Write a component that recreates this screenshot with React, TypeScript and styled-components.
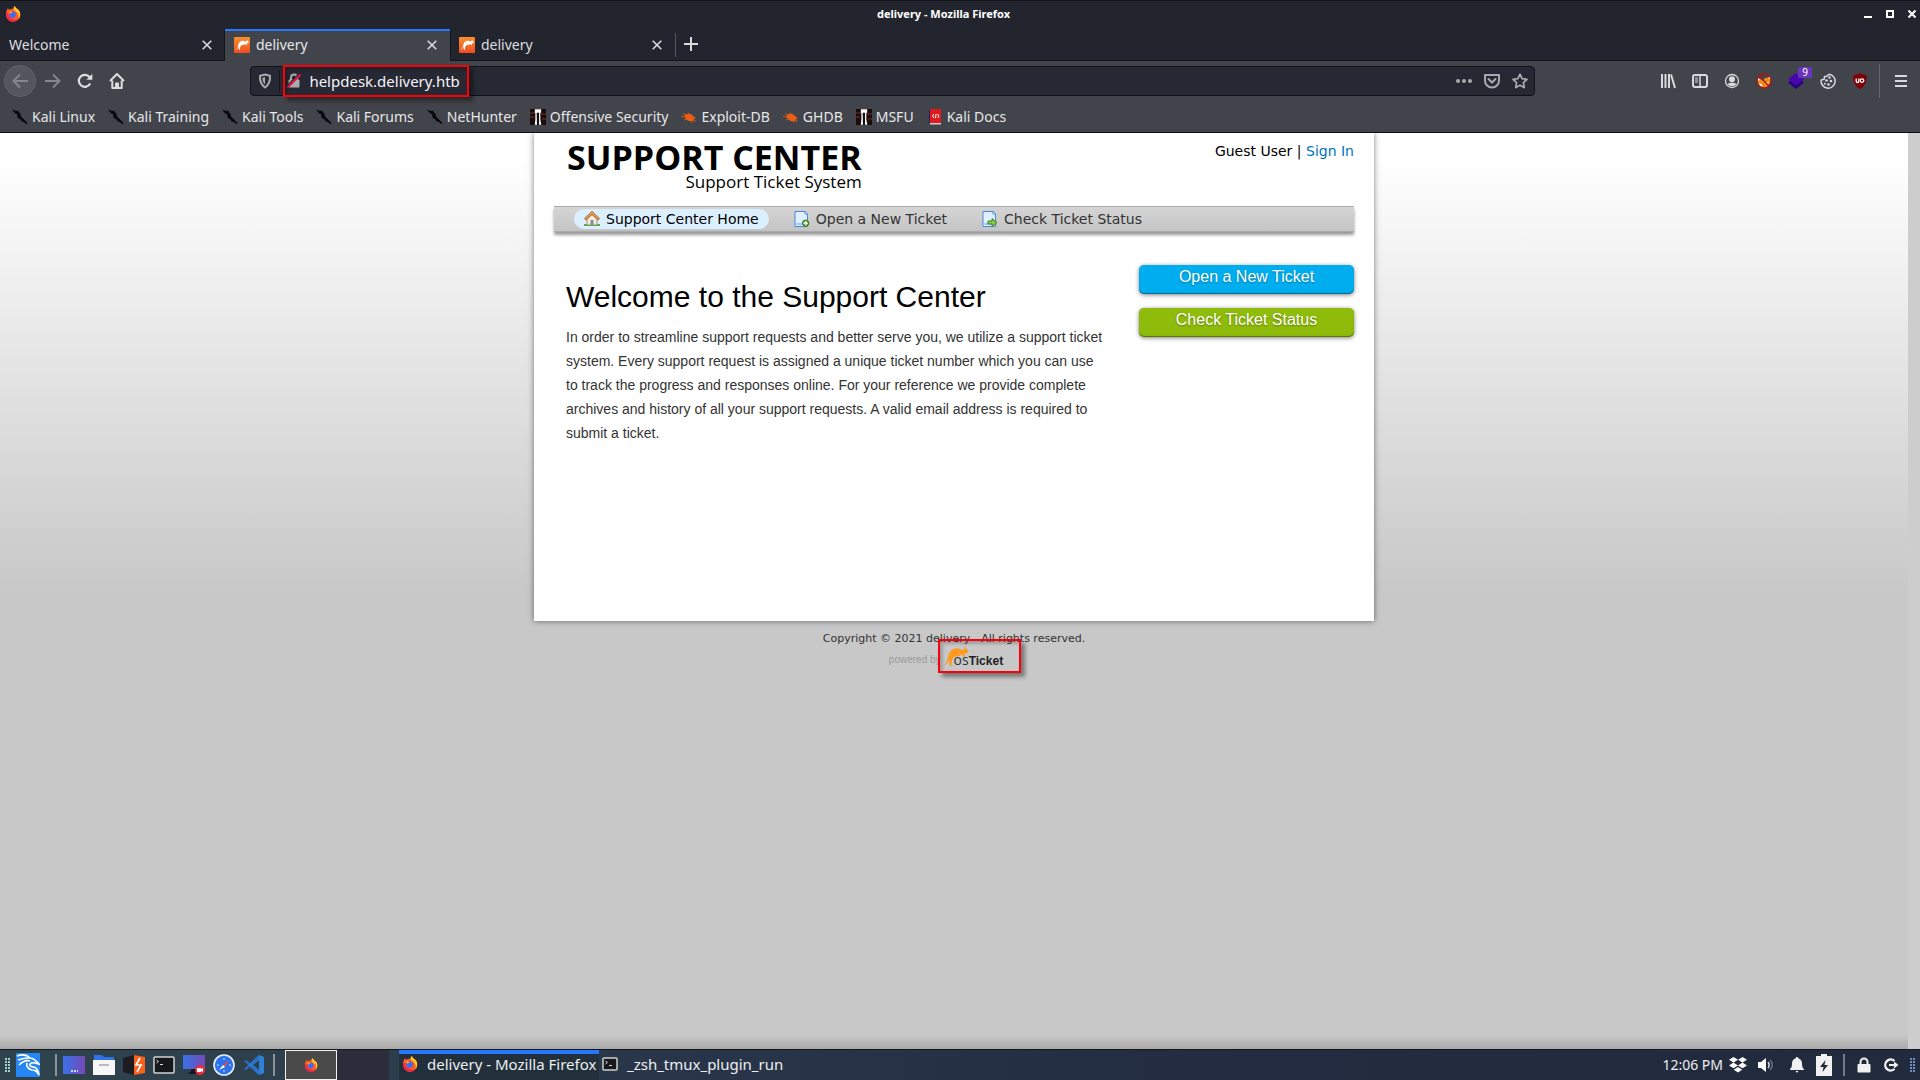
import React from "react";
import styled, { createGlobalStyle } from "styled-components";

const ui = `"Noto Sans", "Open Sans", sans-serif`;
const dejavu = `"DejaVu Sans", Verdana, sans-serif`;
const helvetica = `"Liberation Sans", Arial, sans-serif`;

const GlobalStyle = createGlobalStyle`
  * { box-sizing: border-box; }
  html, body { margin: 0; padding: 0; }
  body { background: #23252e; font-family: ${ui}; }
  button { margin: 0; padding: 0; border: 0; background: none; color: inherit; font: inherit; display: flex; align-items: center; }
  a { text-decoration: none; color: inherit; }
  svg { display: block; flex: none; }
`;

const Screen = styled.div`
  display: flex;
  flex-direction: column;
  min-height: 100vh;
`;

/* ---------- window chrome ---------- */

const TitleBar = styled.header`
  display: grid;
  grid-template-columns: 1fr auto 1fr;
  align-items: center;
  height: 29px;
  padding: 0 4px 2px 5px;
  border-top: 1px solid #101116;
  background: #23252e;
  color: #fff;
`;

const WindowTitle = styled.h1`
  margin: 0;
  padding-right: 34px;
  font-size: 11px;
  line-height: 16px;
  font-weight: 700;
  grid-column: 2;
`;

const WindowButtons = styled.div`
  display: flex;
  justify-content: flex-end;
  gap: 14px;
`;

const TabStrip = styled.nav`
  display: flex;
  height: 32px;
  background: #23252e;
  border-bottom: 1px solid #111218;
`;

const Tab = styled.div<{ $active?: boolean }>`
  display: flex;
  align-items: center;
  gap: 6px;
  width: 225px;
  height: ${(p) => (p.$active ? 32 : 31)}px;
  padding: 0 13px 2px 9px;
  border-top: 2px solid ${(p) => (p.$active ? "#2777ff" : "transparent")};
  background: ${(p) => (p.$active ? "#42444b" : "transparent")};
  box-shadow: ${(p) => (p.$active ? "1px 0 0 #15161c, -1px 0 0 #15161c" : "none")};
  color: ${(p) => (p.$active ? "#e6e7e8" : "#dcdde0")};
  font-size: 14px;
  line-height: 20px;
`;

const TabLabel = styled.span`
  flex: 1;
`;

const NewTab = styled.button`
  && {
    align-self: center;
    height: 24px;
    padding: 0 0 1px 8px;
    border-left: 1px solid #55575f;
  }
`;

const Toolbar = styled.div`
  display: flex;
  align-items: center;
  height: 40px;
  padding: 0 13px 0 4px;
  background: #42444b;
  color: #d8d9dc;
`;

const NavButtons = styled.div`
  display: flex;
  align-items: center;
`;

const NavButton = styled.button<{ $round?: boolean; $dim?: boolean }>`
  && {
    justify-content: center;
    width: 32px;
    height: 32px;
    margin-right: ${(p) => (p.$round ? 1 : 0)}px;
    border-radius: 16px;
    background: ${(p) => (p.$round ? "#55555e" : "none")};
    border: ${(p) => (p.$round ? "1px solid #62636b" : "0")};
    color: ${(p) => (p.$dim ? "#85868b" : "#dcdddd")};
  }
`;

const Spring = styled.div`
  flex: 1 0 2px;
`;

const UrlBar = styled.div`
  display: flex;
  align-items: center;
  flex: 11;
  height: 30px;
  padding: 0 6px 0 7px;
  border: 1px solid #111217;
  border-radius: 4px;
  background: #262833;
  color: #a9aaae;
`;

const UrlShield = styled.button`
  && {
    height: 22px;
    padding-right: 7px;
    border-right: 1px solid #14151b;
  }
`;

const Identity = styled.div`
  position: relative;
  display: flex;
  align-items: center;
  width: 189px;
  padding-left: 7px;
`;

const RedFrame = styled.span`
  position: absolute;
  inset: -4px 0 -4px 3px;
  border: 2px solid #fb0007;
  box-shadow: 4px 4px 4px rgba(0, 0, 0, 0.4), inset 3px 3px 3px rgba(0, 0, 0, 0.2);
  pointer-events: none;
`;

const UrlInput = styled.input`
  flex: 1;
  min-width: 0;
  height: 24px;
  margin-left: 8px;
  padding: 0;
  border: 0;
  outline: 0;
  background: none;
  color: #f4f4f6;
  font: 15px/20px ${ui};
`;

const UrlActions = styled.div`
  display: flex;
  gap: 12px;
  margin-left: auto;
`;

const Tools = styled.div`
  display: flex;
  align-items: center;
`;

const Tool = styled.button`
  && {
    position: relative;
    justify-content: center;
    width: 32px;
    height: 32px;
  }
`;

const Badge = styled.span`
  position: absolute;
  left: 18px;
  top: 2px;
  width: 14px;
  border-radius: 2px;
  background: #6a35bd;
  color: #fff;
  font-size: 10px;
  line-height: 11px;
  text-align: center;
`;

const MenuButton = styled.button`
  && {
    height: 34px;
    margin-left: 3px;
    padding-left: 15px;
    border-left: 1px solid #63656b;
  }
`;

const Bookmarks = styled.nav`
  display: flex;
  align-items: center;
  gap: 13px;
  height: 32px;
  padding: 0 12px;
  border-bottom: 1px solid #0d0e12;
  background: #42444b;
  color: #e6e7e8;
  font-size: 14px;
  line-height: 20px;
`;

const Bookmark = styled.a`
  display: flex;
  align-items: center;
  gap: 4px;
  white-space: nowrap;
`;

/* ---------- web page ---------- */

const Viewport = styled.div`
  display: flex;
  flex: 1;
`;

const Page = styled.div`
  flex: 1;
  display: flex;
  flex-direction: column;
  align-items: center;
  background:
    linear-gradient(to top, #a9a9a9, rgba(200, 200, 200, 0) 14px),
    linear-gradient(#fff 0, #fff 26px, #c8c8c8 458px);
`;

const ScrollTrack = styled.div`
  width: 12px;
  background: #cdcdcd;
`;

const Container = styled.div`
  width: 840px;
  min-height: 488px;
  padding: 0 20px;
  background: #fff;
  box-shadow: 0 0 6px rgba(0, 0, 0, 0.5);
  clip-path: inset(0 -10px -10px -10px);
`;

const SiteHeader = styled.header`
  display: flex;
  justify-content: space-between;
  height: 73px;
  padding: 8px 0 0 13px;
`;

const Logo = styled.a`
  display: flex;
  flex-direction: column;
  align-items: flex-end;
  font-family: "Open Sans", "Noto Sans", sans-serif;
  color: #000;
`;

const LogoTitle = styled.span`
  font-size: 34px;
  line-height: 32px;
  font-weight: 700;
`;

const LogoSub = styled.span`
  font-size: 17px;
  line-height: 18px;
`;

const UserLine = styled.p`
  margin: 0;
  font: 14px/21px ${dejavu};
  color: #000;

  a { color: #0072bc; }
`;

const SiteNav = styled.nav`
  display: flex;
  align-items: center;
  gap: 15px;
  height: 26px;
  padding: 0 0 1px 20px;
  border-top: 1px solid #aaa;
  background: linear-gradient(#d5d5d5, #c3c3c3);
  box-shadow: 0 3px 3px rgba(0, 0, 0, 0.4), inset 0 -1px 0 #aaa;
`;

const SiteNavLink = styled.a<{ $active?: boolean }>`
  display: flex;
  align-items: center;
  gap: 6px;
  height: 20px;
  padding: 0 10px;
  border-radius: 10px;
  background: ${(p) => (p.$active ? "#dbefff" : "transparent")};
  color: ${(p) => (p.$active ? "#000" : "#333")};
  font: 14px/18px ${dejavu};
`;

const Content = styled.main`
  display: flex;
  justify-content: space-between;
  padding: 33px 0 0 12px;
`;

const Intro = styled.section`
  width: 540px;
`;

const Heading = styled.h2`
  margin: 12px 0 8px;
  font: 400 30px/40px ${helvetica};
  color: #000;
`;

const Copy = styled.p`
  margin: 0;
  font: 14px/24px ${helvetica};
  color: #333;
`;

const Side = styled.aside`
  display: flex;
  flex-direction: column;
  gap: 14px;
  width: 215px;
`;

const ActionLink = styled.a<{ $color: string }>`
  height: 29px;
  border-radius: 5px;
  background: ${(p) => p.$color};
  box-shadow: 0 1px 4px rgba(0, 0, 0, 0.5), inset 0 -1px 1px rgba(0, 0, 0, 0.4);
  color: #fff;
  font: 16px/24px ${helvetica};
  text-align: center;
  text-shadow: 0 1px 2px rgba(0, 0, 0, 0.35);
`;

const Footer = styled.footer`
  display: flex;
  flex-direction: column;
  align-items: center;
  padding-top: 9px;
`;

const Copyright = styled.p`
  margin: 0;
  font: 11px/18px ${dejavu};
  color: #333;
`;

const Powered = styled.a`
  display: flex;
  align-items: center;
  gap: 2px;
  height: 24px;
  margin-right: 16px;
  font: 10px/14px ${helvetica};
  color: #999;
`;

const OsTicket = styled.span`
  position: relative;
  display: flex;
  align-items: flex-start;
  height: 28px;
`;

const OsWord = styled.span`
  margin-left: -15px;
  padding-top: 5px;
  font: 14px/18px "Open Sans", sans-serif;
  color: #333;

  b { color: #222; font-family: ${helvetica}; font-size: 12px; }
`;

const TicketFrame = styled(RedFrame)`
  inset: -7px -18px 1px -5px;
`;

/* ---------- desktop panel ---------- */

const Panel = styled.footer`
  display: flex;
  align-items: center;
  height: 31px;
  padding: 0 5px;
  border-top: 1px solid #15171f;
  background: linear-gradient(90deg, #2f434d 0, #2c3f4b 340px, #29364a 640px, #232c40 1200px, #222a3d);
  color: #eceef0;
  font-size: 15px;
  line-height: 20px;
`;

const Launchers = styled.div`
  display: flex;
  align-items: center;
  gap: 8px;
`;

const KaliButton = styled.button`
  && { margin: 0 15px 0 6px; }
`;

const Rule = styled.span`
  width: 2px;
  height: 22px;
  margin-right: 6px;
  background: #8c949c;
`;

const Workspaces = styled.div`
  display: flex;
  margin: 0 10px 0 4px;
`;

const Workspace = styled.button<{ $current?: boolean }>`
  && {
    justify-content: center;
    width: 52px;
    height: 30px;
    border: ${(p) => (p.$current ? "1px solid #f2f2f2" : "0")};
    background: ${(p) => (p.$current ? "#4a4a4b" : "#2b2e3a")};
  }
`;

const Task = styled.button<{ $active?: boolean }>`
  && {
    gap: 9px;
    width: 200px;
    height: 30px;
    padding: 0 3px 6px;
    border-top: 4px solid ${(p) => (p.$active ? "#2777ff" : "transparent")};
    background: ${(p) => (p.$active ? "#22303c" : "transparent")};
    white-space: nowrap;
  }
`;

const Tray = styled.div`
  display: flex;
  align-items: center;
  gap: 11px;
  margin-left: auto;
`;

const Clock = styled.time`
  margin-right: -5px;
  font-size: 14px;
`;

/* ---------- drawings ---------- */

const FirefoxIcon = ({ size = 16 }: { size?: number }) => (
  <svg width={size} height={size} viewBox="0 0 16 16">
    <path d="M1 8c0-3 1-4.500 2-6 .3 1 .7 1.400 1.200 1.800C5.500 2.800 7 2.500 8.600 3 8.500 1.600 9 .8 10 0c.2 1.400 1 2 2 2.800C14 4 15.500 6 15.200 9 14.800 13 11.700 15.700 8 15.700 4 15.700 1 12.500 1 8z" fill="#ff5a1f" />
    <path d="M1 8.500c.2 4 3.200 7.200 7 7.200 2.500 0 4.700-1.200 6-3.200-2 1.500-5 1.700-7.300.3C4 11.200 3 9 3 6.500c-1 .5-1.700 1-2 2z" fill="#f0264f" />
    <path d="M10 0c.2 1.400 1 2 2 2.800C14 4 15.500 6 15.200 9c-.2 1.600-.8 3-1.700 4 .5-3 0-5-1.500-6.500C10.500 5 8.800 4.500 8.600 3 8.500 1.600 9 .8 10 0z" fill="#ffc62d" />
    <circle cx="7.600" cy="8.600" r="3.200" fill="#3b6cf5" />
    <path d="M3.500 5.500c1.500-.7 3-.3 4 .8L6 7.500C5 7.500 4 7 3.500 5.500z" fill="#ff9a2b" />
  </svg>
);

const roo =
  "M0 19C4 19 4 14 5 11 6 5 10 1.800 15 2.200L19 4l2.300-.5L22 0l1.500 3L26 5.500 24 7l-2.500.3L22 11l-1.500-.5L19 8.500c-2 1.500-5 1.500-8 2.500l-2 3.300L8.500 19l2 .8H6.300L6.800 13C5.300 16 4 19.800 0 19z";

const RooIcon = () => (
  <svg width="16" height="16" viewBox="0 0 16 16">
    <defs>
      <linearGradient id="roo" x1="0" y1="0" x2="0" y2="1">
        <stop offset="0" stopColor="#f9902b" />
        <stop offset="1" stopColor="#ef4d22" />
      </linearGradient>
    </defs>
    <rect width="16" height="16" rx="1" fill="url(#roo)" />
    <path d={roo} fill="#fff" transform="translate(1.500 2.500) scale(.52)" />
  </svg>
);

const CloseIcon = () => (
  <svg width="10" height="10" viewBox="0 0 10 10" stroke="#d9d9da" strokeWidth="1.600">
    <path d="M.7.700l8.600 8.600M9.300.700L.7 9.300" />
  </svg>
);

const KaliMark = () => (
  <svg width="16" height="16" viewBox="0 0 16 16">
    <path d="M0 .5l4 1.500L6 1.500l.8 1.800L9 5.500l-.5 1.300 2.500 2.700L15.500 14l-.8 1.200-3.200-2.400-2-.2-.8-2L6.500 9.500 5 7l.8-1.300L3 4.200z" fill="#08080a" />
  </svg>
);

const OffsecMark = () => (
  <svg width="16" height="16" viewBox="0 0 16 16">
    <path fill="#1d0b0b" d="M0 0h16v16H0z" />
    <path d="M0 4h5M0 8h4M11 5h5M12 10h4" stroke="#6a3531" />
    <path d="M5.500 1h5v2h-5zM6 3v8l-.5 4H7M9.700 3v8l.8 4H9" stroke="#fff" strokeWidth="1.300" fill="#eee" />
    <path d="M7.200 4.500h1.600v11H7.200z" fill="#111" />
  </svg>
);

const BugMark = () => (
  <svg width="16" height="16" viewBox="0 0 16 16">
    <ellipse cx="8.500" cy="8.500" rx="5.200" ry="3.400" transform="rotate(22 8.500 8.500)" fill="#ea5d12" />
    <path d="M2 4.500l4 1.700M0 7.500l5 .5M3 11l3-1M7 3.500l2 2M12 11l3 1.500M10 12l2 2M13 8.500l2 .5" stroke="#ea5d12" strokeWidth=".8" fill="none" />
  </svg>
);

const DocsMark = () => (
  <svg width="16" height="16" viewBox="0 0 16 16">
    <path fill="#20245a" d="M2 1h2v13H2z" />
    <path fill="#de1a1e" d="M3 0h11v14H3z" />
    <path fill="#ccc" d="M3 14h11v1.500H3z" />
    <path d="M7 5L5.500 7 7 9M10.500 5L12 7l-1.500 2M9.200 5l-.8 4" stroke="#fff" fill="none" />
  </svg>
);

const BellIcon = () => (
  <svg width="16" height="16" viewBox="0 0 16 16" fill="#eff0f0">
    <path d="M8 0c.8 0 1.200.5 1.200 1.200C11.800 1.800 13 4 13 6.500c0 3 .6 4.500 2 5.500v1H1v-1c1.400-1 2-2.500 2-5.500C3 4 4.200 1.800 6.800 1.200 6.800.5 7.200 0 8 0z" />
    <path d="M6.500 14h3l-1 1.500h-1z" />
  </svg>
);

const TermIcon = ({ w = 22, h = 18 }: { w?: number; h?: number }) => (
  <svg width={w} height={h} viewBox={`0 0 ${w} ${h}`}>
    <rect x="1" y="1" width={w - 2} height={h - 2} rx="1" fill="#171819" stroke="#cfd1d1" strokeWidth="1.500" />
    <path d="M3.500 4l2 1.500-2 1.500M7 8.500h3" stroke="#ddd" fill="none" />
  </svg>
);

const Grip = ({ tint }: { tint: string }) => (
  <svg width="5" height="15" viewBox="0 0 5 15" fill={tint}>
    {[0, 3, 6, 9, 12].map((y) => (
      <path key={y} d={`M0 ${y}h2v2H0zM3 ${y}h2v2H3z`} />
    ))}
  </svg>
);

const PaperIcon = ({ kind }: { kind: "add" | "go" }) => (
  <svg width="16" height="16" viewBox="0 0 16 16">
    <path d="M1 .5h10.500l2 2.500v12.500H1z" fill="#dff0ff" stroke="#4a86d8" />
    <path d="M11 .5V3h2.500" fill="#fff" stroke="#4a86d8" />
    <path d="M2.500 12h6v2h-6z" fill="#8ecbff" />
    {kind === "add" ? (
      <>
        <circle cx="11.700" cy="12.200" r="3.200" fill="#5fa53a" stroke="#3a7a22" />
        <path d="M9.700 12.200h4M11.700 10.200v4" stroke="#fff" strokeWidth="1.400" />
      </>
    ) : (
      <path d="M6 10h4V7.500l5 4-5 4V13H6z" fill="#8cc63f" stroke="#3d8226" />
    )}
  </svg>
);

const HouseIcon = () => (
  <svg width="16" height="16" viewBox="0 0 16 16">
    <path d="M0 13h16v2H0z" fill="#58ad45" />
    <path d="M3 7l5-5 5 5v7H3z" fill="#f4ead9" stroke="#94806c" strokeWidth=".8" />
    <path d="M1 8.500L8 2l7 6.500" fill="none" stroke="#a45f20" strokeWidth="3" />
    <path d="M1.300 8L8 1.800 14.700 8" fill="none" stroke="#e9ad67" strokeWidth="1.300" />
    <path d="M6.500 9h3v5h-3z" fill="#86909b" />
  </svg>
);

const bookmarks: [string, () => React.ReactElement][] = [
  ["Kali Linux", KaliMark],
  ["Kali Training", KaliMark],
  ["Kali Tools", KaliMark],
  ["Kali Forums", KaliMark],
  ["NetHunter", KaliMark],
  ["Offensive Security", OffsecMark],
  ["Exploit-DB", BugMark],
  ["GHDB", BugMark],
  ["MSFU", OffsecMark],
  ["Kali Docs", DocsMark],
];

const Browser = () => (
  <>
    <TitleBar>
      <FirefoxIcon />
      <WindowTitle>delivery - Mozilla Firefox</WindowTitle>
      <WindowButtons>
        <button aria-label="Minimize"><svg width="8" height="8"><path d="M0 6h8v2H0z" fill="#fff" /></svg></button>
        <button aria-label="Maximize"><svg width="8" height="8"><path d="M1 1h6v6H1z" fill="none" stroke="#fff" strokeWidth="2" /></svg></button>
        <button aria-label="Close"><svg width="8" height="8"><path d="M.5.500l7 7M7.500.500l-7 7" stroke="#fff" strokeWidth="2" /></svg></button>
      </WindowButtons>
    </TitleBar>
    <TabStrip>
      <Tab>
        <TabLabel>Welcome</TabLabel>
        <button aria-label="Close tab"><CloseIcon /></button>
      </Tab>
      <Tab $active>
        <RooIcon />
        <TabLabel>delivery</TabLabel>
        <button aria-label="Close tab"><CloseIcon /></button>
      </Tab>
      <Tab>
        <RooIcon />
        <TabLabel>delivery</TabLabel>
        <button aria-label="Close tab"><CloseIcon /></button>
      </Tab>
      <NewTab aria-label="New tab">
        <svg width="14" height="14"><path d="M7 0v14M0 7h14" stroke="#d9d9da" strokeWidth="2" /></svg>
      </NewTab>
    </TabStrip>
    <Toolbar>
      <NavButtons>
        <NavButton $round $dim aria-label="Back">
          <svg width="16" height="16" fill="none" stroke="currentColor" strokeWidth="2"><path d="M16 8H1.500M8 1.500L1.500 8 8 14.500" /></svg>
        </NavButton>
        <NavButton $dim aria-label="Forward">
          <svg width="16" height="16" fill="none" stroke="currentColor" strokeWidth="2"><path d="M0 8h14.500M8 1.500L14.500 8 8 14.500" /></svg>
        </NavButton>
        <NavButton aria-label="Reload">
          <svg width="16" height="16" fill="none" stroke="currentColor" strokeWidth="2.200"><path d="M13.200 10.500A6 6 0 1 1 12.500 4L14 5.500" /><path d="M15.300.800v6H9.300z" fill="currentColor" stroke="none" /></svg>
        </NavButton>
        <NavButton aria-label="Home">
          <svg width="16" height="16" fill="none" stroke="currentColor" strokeWidth="2" strokeLinejoin="round"><path d="M1 8l7-7 7 7M3.300 7.500V15h9.400V7.500" /><path d="M7 15v-4.500h2V15" /></svg>
        </NavButton>
      </NavButtons>
      <Spring />
      <UrlBar>
        <UrlShield aria-label="Tracking protection">
          <svg width="14" height="16" viewBox="0 0 14 16"><path d="M7 1.500l5 1.300c.3 5-1 9-5 11.700C3 11.800 1.700 7.800 2 2.800z" fill="none" stroke="currentColor" strokeWidth="2" /><path d="M7 4v7.500C5 9.500 4.500 7.500 4.500 4.700z" fill="currentColor" /></svg>
        </UrlShield>
        <Identity>
          <svg width="14" height="16" viewBox="0 0 14 16">
            <path d="M4 7V4.500a3 3 0 0 1 6 0V7" fill="none" stroke="#a9aaae" strokeWidth="2" />
            <rect x="1.500" y="6.500" width="11" height="8" rx="1" fill="#a9aaae" />
            <path d="M0 14L13 1" stroke="#262833" strokeWidth="3" />
            <path d="M.5 14.500L13.500 1.500" stroke="#e8183f" strokeWidth="2" />
          </svg>
          <UrlInput aria-label="Address" defaultValue="helpdesk.delivery.htb" />
          <RedFrame />
        </Identity>
        <UrlActions>
          <button aria-label="Page actions"><svg width="16" height="16" fill="currentColor"><circle cx="2" cy="8" r="2" /><circle cx="8" cy="8" r="2" /><circle cx="14" cy="8" r="2" /></svg></button>
          <button aria-label="Save to Pocket"><svg width="16" height="16" fill="none" stroke="currentColor" strokeWidth="2"><path d="M1 2h14v5.500a7 7 0 0 1-14 0z" strokeLinejoin="round" /><path d="M4.500 6L8 9.500 11.500 6" strokeLinecap="round" /></svg></button>
          <button aria-label="Bookmark this page"><svg width="16" height="16" fill="none" stroke="currentColor" strokeWidth="1.700" strokeLinejoin="round"><path d="M8 1.200l2.100 4.500 4.900.6-3.600 3.400.9 4.900L8 12.200l-4.300 2.400.9-4.900L1 6.300l4.900-.6z" /></svg></button>
        </UrlActions>
      </UrlBar>
      <Spring />
      <Tools>
        <Tool aria-label="Library"><svg width="16" height="16" stroke="currentColor" strokeWidth="2"><path d="M2 1v14M5.500 1v14M9 1v14M11 1.500l4 13.500" /></svg></Tool>
        <Tool aria-label="Sidebars"><svg width="16" height="16" fill="none" stroke="currentColor"><rect x="1" y="2" width="14" height="12" rx="2" strokeWidth="2" /><path d="M8 2v12" strokeWidth="1.500" /><path d="M3 5h3M3 7h3M3 9h3" /></svg></Tool>
        <Tool aria-label="Account"><svg width="16" height="16" viewBox="0 0 16 16" fill="currentColor"><circle cx="8" cy="8" r="6.500" fill="none" stroke="currentColor" strokeWidth="1.300" /><circle cx="8" cy="6.300" r="3" /><path d="M3.500 11c2-1.800 7-1.800 9 0-2 3-7 3-9 0z" /></svg></Tool>
        <Tool aria-label="FoxyProxy">
          <svg width="16" height="16" viewBox="0 0 16 16">
            <path d="M2 8l2.500-2L7 7.500 9 5l3-.5L14 3l.8 3-.8 4-2.500 3.500L8 14.500l-3.500-1L2.500 11z" fill="#ef8a1c" />
            <path d="M3 10.500l2.500.5 1 2-2.500-.5zM13.500 3l1 3.500-2-1.500zM1.500 5L4 6 2.500 8.500zM11 9l2 .5-1.500 2z" fill="#fff" />
            <circle cx="8" cy="8" r="7.200" fill="none" stroke="#b31212" strokeWidth="1.200" />
            <path d="M3 3l10 10" stroke="#b31212" strokeWidth="1.200" />
          </svg>
        </Tool>
        <Tool aria-label="Wappalyzer">
          <svg width="16" height="16" viewBox="0 0 16 16"><path d="M0 9.500L8 4l8 5.500L8 16z" fill="#260078" /><path d="M0 6.500L8 0l8 6.500L8 13z" fill="#4608ad" /></svg>
          <Badge>9</Badge>
        </Tool>
        <Tool aria-label="Cookie editor">
          <svg width="16" height="16" viewBox="0 0 16 16">
            <path d="M9 1.200A7 7 0 1 1 1.200 7l3-.8.3-2.700 2.500-.3z" fill="none" stroke="currentColor" strokeWidth="1.500" strokeLinejoin="round" />
            <g fill="currentColor"><circle cx="9.500" cy="4.500" r="1.200" /><circle cx="6.500" cy="7.500" r="1.300" /><circle cx="11" cy="8" r="1.300" /><circle cx="4.800" cy="10.800" r="1" /><circle cx="8.500" cy="11.500" r="1.300" /></g>
          </svg>
        </Tool>
        <Tool aria-label="uBlock Origin">
          <svg width="16" height="16" viewBox="0 0 16 16"><path d="M8 0c2 1.500 4 2 6.500 2 .5 6-1 11-6.500 14C2.500 13 1 8 1.500 2 4 2 6 1.500 8 0z" fill="#800006" /><path d="M4.200 5.500v2.700a1.300 1.300 0 0 0 2.600 0V5.500" fill="none" stroke="#fff" strokeWidth="1.300" /><circle cx="10" cy="7.600" r="1.800" fill="none" stroke="#fff" strokeWidth="1.300" /></svg>
        </Tool>
      </Tools>
      <MenuButton aria-label="Menu"><svg width="12" height="12"><path d="M0 1h12M0 6h12M0 11h12" stroke="currentColor" strokeWidth="2" /></svg></MenuButton>
    </Toolbar>
    <Bookmarks>
      {bookmarks.map(([label, Icon]) => (
        <Bookmark href="#" key={label}>
          <Icon />
          {label}
        </Bookmark>
      ))}
    </Bookmarks>
  </>
);

const SupportSite = () => (
  <Viewport>
    <Page>
      <Container>
        <SiteHeader>
          <Logo href="#">
            <LogoTitle>SUPPORT CENTER</LogoTitle>
            <LogoSub>Support Ticket System</LogoSub>
          </Logo>
          <UserLine>Guest User | <a href="#">Sign In</a></UserLine>
        </SiteHeader>
        <SiteNav>
          <SiteNavLink href="#" $active><HouseIcon />Support Center Home</SiteNavLink>
          <SiteNavLink href="#"><PaperIcon kind="add" />Open a New Ticket</SiteNavLink>
          <SiteNavLink href="#"><PaperIcon kind="go" />Check Ticket Status</SiteNavLink>
        </SiteNav>
        <Content>
          <Intro>
            <Heading>Welcome to the Support Center</Heading>
            <Copy>
              In order to streamline support requests and better serve you, we utilize a support ticket system. Every
              support request is assigned a unique ticket number which you can use to track the progress and responses
              online. For your reference we provide complete archives and history of all your support requests. A valid
              email address is required to submit a ticket.
            </Copy>
          </Intro>
          <Side>
            <ActionLink href="#" $color="#00aeef">Open a New Ticket</ActionLink>
            <ActionLink href="#" $color="#8fbc0a">Check Ticket Status</ActionLink>
          </Side>
        </Content>
      </Container>
      <Footer>
        <Copyright>Copyright © 2021 delivery - All rights reserved.</Copyright>
        <Powered href="#">
          powered by
          <OsTicket>
            <svg width="26" height="20" viewBox="0 0 26 20"><path d={roo} fill="#ff9a1e" /></svg>
            <OsWord>os<b>Ticket</b></OsWord>
            <TicketFrame />
          </OsTicket>
        </Powered>
      </Footer>
    </Page>
    <ScrollTrack />
  </Viewport>
);

const Desktop = () => (
  <Panel>
    <Grip tint="#9fd0d2" />
    <KaliButton aria-label="Applications">
      <svg width="24" height="24" viewBox="0 0 24 24">
        <path d="M0 0h24v24H0z" fill="#2487f5" />
        <path d="M1 3c5-2 10-1 13 2M2 7c5-2 9-2 12-2M3 12c4-4 8-5 11-4M14 5c2 0 4 1 6 3l3 3-4-1c-2-1-4 0-5 1-1 2 2 3 4 3 3 1 4 3 5 8-2-4-4-5-7-5-4-1-6-4-5-7" fill="none" stroke="#fff" strokeWidth="1.700" />
      </svg>
    </KaliButton>
    <Rule />
    <Launchers>
      <button aria-label="Show desktop">
        <svg width="22" height="18"><defs><linearGradient id="desk"><stop offset="0" stopColor="#3872e8" /><stop offset="1" stopColor="#754ab6" /></linearGradient></defs><path d="M0 0h22v18H0z" fill="url(#desk)" /><path d="M8 15h2M11 15h2M14 15h1" stroke="#fff" strokeWidth="1.500" /></svg>
      </button>
      <button aria-label="Files">
        <svg width="22" height="20"><path d="M1 0h8l2 2h10v4H1z" fill="#2f72e8" /><path d="M0 5h22v15H0z" fill="#f6f6f6" /><path d="M6 10h10" stroke="#b9b9b9" strokeWidth="2" /></svg>
      </button>
      <button aria-label="Burp Suite">
        <svg width="22" height="20"><path d="M0 3l11-3v20L0 17z" fill="#1d1c22" /><path d="M11 0l11 2v16l-11 2z" fill="#f9611c" /><path d="M17 3l-4 7h5l-4 7" fill="none" stroke="#fff" strokeWidth="1.700" /></svg>
      </button>
      <button aria-label="Terminal"><TermIcon /></button>
      <button aria-label="Screen recorder">
        <svg width="22" height="20"><path d="M0 0h22v14H0z" fill="url(#desk)" /><path d="M8 14h6v3h2v2H6v-2h2z" fill="#15161c" /><circle cx="17" cy="15" r="5" fill="#ef2a36" /><path d="M14 13h4v1l2-1v4l-2-1v1h-4z" fill="#fff" /></svg>
      </button>
      <button aria-label="Web browser">
        <svg width="22" height="22"><circle cx="11" cy="11" r="10" fill="#2c73ea" stroke="#eef" strokeWidth="1.600" /><path d="M16 6l-4 7-2-2z" fill="#f04848" /><path d="M6 16l4-5 2 2z" fill="#fff" /><path d="M11 4v2M11 16v2M4 11h2M16 11h2" stroke="#cfe0ff" /></svg>
      </button>
      <button aria-label="VS Code">
        <svg width="22" height="22"><path d="M16 1l5 2v16l-5 2L5 11z" fill="#2f7ed8" /><path d="M16 6v10l-6-5z" fill="#2d414c" /><path d="M1 7l2-1 14 12-1 3zM1 15l2 1L16 5V1z" fill="#2b6fc6" /></svg>
      </button>
      <Rule />
    </Launchers>
    <Workspaces>
      <Workspace $current aria-label="Workspace 1"><FirefoxIcon size={14} /></Workspace>
      <Workspace aria-label="Workspace 2" />
    </Workspaces>
    <Task $active><FirefoxIcon />delivery - Mozilla Firefox</Task>
    <Task><TermIcon w={16} h={14} />_zsh_tmux_plugin_run</Task>
    <Tray>
      <Clock>12:06 PM</Clock>
      <svg width="18" height="16" viewBox="0 0 18 16" fill="#fff"><path d="M4.500 0L9 2.800 4.500 5.600 0 2.800zM13.500 0L18 2.800l-4.500 2.800L9 2.800zM4.500 5.600L9 8.400l-4.500 2.800L0 8.400zM13.500 5.600L18 8.400l-4.500 2.800L9 8.400zM9 10l4.200 2.700L9 15.500l-4.200-2.800z" /></svg>
      <svg width="20" height="16" viewBox="0 0 20 16"><path d="M0 5h3l5-4v14l-5-4H0z" fill="#fff" /><path d="M10 5c1.500 1.500 1.500 4.500 0 6" stroke="#ddd" strokeWidth="1.500" fill="none" /><path d="M12 3c3 2.500 3 7.500 0 10" stroke="#65708a" strokeWidth="1.500" fill="none" /></svg>
      <BellIcon />
      <svg width="16" height="22" viewBox="0 0 16 22"><path d="M5 0h6v2h5v20H0V2h5z" fill="#f1f1f1" /><path d="M9.500 6L4 13h3.500L6.500 18 12 11H8.500z" fill="#222a3d" /></svg>
      <svg width="2" height="22"><path d="M0 0h2v22H0z" fill="#747b8a" /></svg>
      <svg width="16" height="16" viewBox="0 0 16 16"><path d="M4.500 8V5a3.500 3.500 0 0 1 7 0v3" fill="none" stroke="#f1f1f1" strokeWidth="2" /><rect x="1.500" y="7" width="13" height="8.500" rx="1" fill="#f1f1f1" /></svg>
      <svg width="16" height="16" viewBox="0 0 16 16"><path d="M11.500 4A5.500 5.500 0 1 0 11.500 12" fill="none" stroke="#f1f1f1" strokeWidth="2.400" /><path d="M6 7h5V4.500L15.500 8 11 11.500V9H6z" fill="#f1f1f1" /></svg>
      <Grip tint="#6f8fc0" />
    </Tray>
  </Panel>
);

export default function App() {
  return (
    <Screen>
      <GlobalStyle />
      <Browser />
      <SupportSite />
      <Desktop />
    </Screen>
  );
}
